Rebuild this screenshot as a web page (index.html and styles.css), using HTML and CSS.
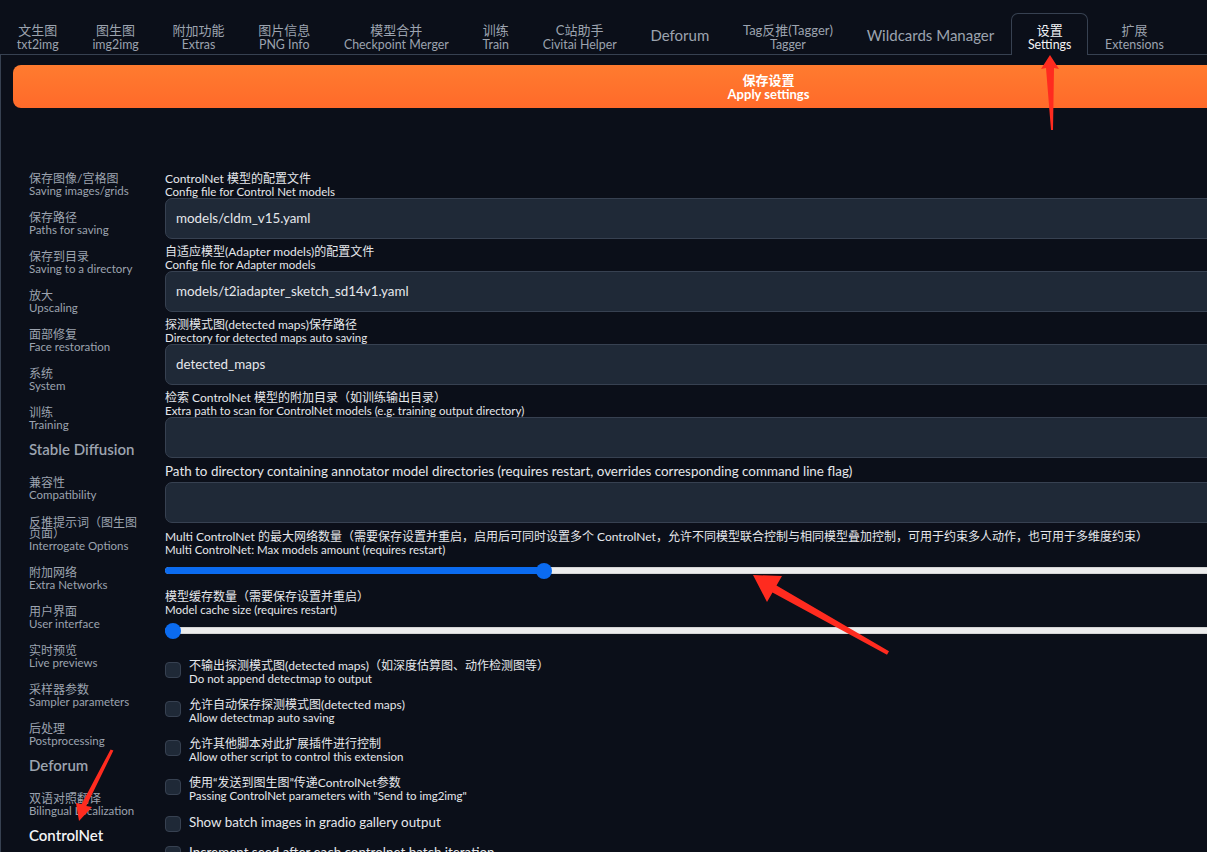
FILE: index.html
```html
<!DOCTYPE html>
<html lang="zh">
<head>
<meta charset="utf-8">
<title>Settings</title>
<link rel="stylesheet" href="styles.css">
</head>
<body>
<div class="app">
  <nav class="tabs">
    <div class="tab"><span class="cn">文生图</span><span class="en">txt2img</span></div>
    <div class="tab"><span class="cn">图生图</span><span class="en">img2img</span></div>
    <div class="tab"><span class="cn">附加功能</span><span class="en">Extras</span></div>
    <div class="tab"><span class="cn">图片信息</span><span class="en">PNG Info</span></div>
    <div class="tab"><span class="cn">模型合并</span><span class="en">Checkpoint Merger</span></div>
    <div class="tab"><span class="cn">训练</span><span class="en">Train</span></div>
    <div class="tab"><span class="cn">C站助手</span><span class="en">Civitai Helper</span></div>
    <div class="tab single"><span>Deforum</span></div>
    <div class="tab"><span class="cn">Tag反推(Tagger)</span><span class="en">Tagger</span></div>
    <div class="tab single"><span>Wildcards Manager</span></div>
    <div class="tab active"><span class="cn">设置</span><span class="en">Settings</span></div>
    <div class="tab"><span class="cn">扩展</span><span class="en">Extensions</span></div>
  </nav>

  <div class="panel">
    <button class="apply"><span>保存设置</span><span>Apply settings</span></button>

    <div class="settings">
      <aside class="side">
        <div class="item"><span class="cn">保存图像/宫格图</span><span class="en">Saving images/grids</span></div>
        <div class="item"><span class="cn">保存路径</span><span class="en">Paths for saving</span></div>
        <div class="item"><span class="cn">保存到目录</span><span class="en">Saving to a directory</span></div>
        <div class="item"><span class="cn">放大</span><span class="en">Upscaling</span></div>
        <div class="item"><span class="cn">面部修复</span><span class="en">Face restoration</span></div>
        <div class="item"><span class="cn">系统</span><span class="en">System</span></div>
        <div class="item"><span class="cn">训练</span><span class="en">Training</span></div>
        <div class="head">Stable Diffusion</div>
        <div class="item"><span class="cn">兼容性</span><span class="en">Compatibility</span></div>
        <div class="item wrap"><span class="cn">反推提示词（图生图页面）</span><span class="en">Interrogate Options</span></div>
        <div class="item"><span class="cn">附加网络</span><span class="en">Extra Networks</span></div>
        <div class="item"><span class="cn">用户界面</span><span class="en">User interface</span></div>
        <div class="item"><span class="cn">实时预览</span><span class="en">Live previews</span></div>
        <div class="item"><span class="cn">采样器参数</span><span class="en">Sampler parameters</span></div>
        <div class="item"><span class="cn">后处理</span><span class="en">Postprocessing</span></div>
        <div class="head">Deforum</div>
        <div class="item"><span class="cn">双语对照翻译</span><span class="en">Bilingual Localization</span></div>
        <div class="head current">ControlNet</div>
      </aside>

      <main class="content">
        <div class="field">
          <label class="lbl"><span class="cn">ControlNet 模型的配置文件</span><span class="en">Config file for Control Net models</span></label>
          <div class="input">models/cldm_v15.yaml</div>
        </div>
        <div class="field">
          <label class="lbl"><span class="cn">自适应模型(Adapter models)的配置文件</span><span class="en">Config file for Adapter models</span></label>
          <div class="input">models/t2iadapter_sketch_sd14v1.yaml</div>
        </div>
        <div class="field">
          <label class="lbl"><span class="cn">探测模式图(detected maps)保存路径</span><span class="en">Directory for detected maps auto saving</span></label>
          <div class="input">detected_maps</div>
        </div>
        <div class="field">
          <label class="lbl"><span class="cn">检索 ControlNet 模型的附加目录（如训练输出目录）</span><span class="en">Extra path to scan for ControlNet models (e.g. training output directory)</span></label>
          <div class="input"></div>
        </div>
        <div class="field">
          <label class="lbl single">Path to directory containing annotator model directories (requires restart, overrides corresponding command line flag)</label>
          <div class="input"></div>
        </div>

        <div class="slider-field first">
          <label class="lbl"><span class="cn">Multi ControlNet 的最大网络数量（需要保存设置并重启，启用后可同时设置多个 ControlNet，允许不同模型联合控制与相同模型叠加控制，可用于约束多人动作，也可用于多维度约束）</span><span class="en">Multi ControlNet: Max models amount (requires restart)</span></label>
          <div class="slider"><div class="track"><div class="fill" style="width:378px"></div><div class="thumb" style="left:378px"></div></div></div>
        </div>
        <div class="slider-field">
          <label class="lbl"><span class="cn">模型缓存数量（需要保存设置并重启）</span><span class="en">Model cache size (requires restart)</span></label>
          <div class="slider"><div class="track"><div class="fill" style="width:7px"></div><div class="thumb" style="left:7px"></div></div></div>
        </div>

        <div class="checks">
          <div class="check"><span class="box"></span><span class="ctext"><span class="cn">不输出探测模式图(detected maps)（如深度估算图、动作检测图等）</span><span class="en">Do not append detectmap to output</span></span></div>
          <div class="check"><span class="box"></span><span class="ctext"><span class="cn">允许自动保存探测模式图(detected maps)</span><span class="en">Allow detectmap auto saving</span></span></div>
          <div class="check"><span class="box"></span><span class="ctext"><span class="cn">允许其他脚本对此扩展插件进行控制</span><span class="en">Allow other script to control this extension</span></span></div>
          <div class="check"><span class="box"></span><span class="ctext"><span class="cn">使用“发送到图生图”传递ControlNet参数</span><span class="en">Passing ControlNet parameters with "Send to img2img"</span></span></div>
          <div class="check single"><span class="box"></span><span class="ctext">Show batch images in gradio gallery output</span></div>
          <div class="check single"><span class="box"></span><span class="ctext">Increment seed after each controlnet batch iteration</span></div>
        </div>
      </main>
    </div>
  </div>

  <svg class="marks" width="1207" height="852" viewBox="0 0 1207 852" aria-hidden="true">
    <polygon points="1050,55 1059,69 1054,68 1053,130 1051,130 1046,68 1041,69"/>
    <polygon points="753,575 782,576 776.5,585.5 889,651.3 887,654.7 772.5,592.5 767,602"/>
    <polygon points="79,821 76,803 81.7,804 110.6,749.4 113.4,750.6 86.3,806 92,807"/>
  </svg>
</div>
</body>
</html>
```

FILE: styles.css
```css
* { box-sizing: border-box; margin: 0; padding: 0; }
html, body { background: #0b0f19; overflow: hidden; }
body {
  margin: 0;
  font-family: Lato, "Noto Sans CJK SC", sans-serif;
  color: #e5e7eb;
}
.app { position: relative; width: 1536px; height: 852px; }

/* top tabs */
.tabs {
  display: flex;
  align-items: flex-start;
  height: 55px;
  padding-top: 13px;
  border-bottom: 1px solid #374151;
}
.tab {
  display: flex;
  flex-direction: column;
  align-items: center;
  height: 41px;
  padding: 11px 16.85px 0;
  color: #9ca3af;
  line-height: 13.5px;
  white-space: nowrap;
}
.tab .cn { font-size: 13px; }
.tab .en { font-size: 12.4px; }
.tab.single { font-size: 15px; line-height: 16px; padding-top: 14px; }
.tab.active {
  height: 42px;
  margin-bottom: -1px;
  padding: 10px 15.85px 0;
  border: 1px solid #374151;
  border-bottom: none;
  border-radius: 7px 7px 0 0;
  background: #0b0f19;
  color: #f3f4f6;
}

/* panel */
.panel {
  border-left: 1px solid #374151;
  padding: 10px 12px 0 12px;
}
.apply {
  display: flex;
  flex-direction: column;
  justify-content: center;
  align-items: center;
  width: 100%;
  height: 43px;
  border: none;
  border-radius: 8px;
  background: linear-gradient(180deg, #ff7b2f 0%, #ff6a2a 100%);
  color: #ffffff;
  font-family: inherit;
  font-size: 13px;
  line-height: 14px;
  font-weight: 700;
}

.settings { display: flex; margin-top: 62px; }

/* sidebar */
.side {
  width: 152px;
  flex: none;
  padding: 3px 0 0 16px;
  display: flex;
  flex-direction: column;
  gap: 15px;
  color: #9ca3af;
}
.item { display: flex; flex-direction: column; width: 114px; }
.item.wrap { margin-top: 1px; }
.item .cn { font-size: 12px; line-height: 11px; }
.item .en { font-size: 11.5px; line-height: 13px; white-space: nowrap; }
.head {
  font-size: 15px;
  line-height: 25px;
  margin-top: -9px;
  font-weight: 600;
  white-space: nowrap;
}
.head.current { color: #f3f4f6; }

/* content */
.content { flex: 1; padding-top: 3px; min-width: 0; }
.field { margin-bottom: 7px; }
.lbl { display: flex; flex-direction: column; color: #e5e7eb; }
.lbl .cn { font-size: 12px; line-height: 12px; white-space: nowrap; }
.lbl .en { font-size: 11.5px; line-height: 13px; white-space: nowrap; }
.lbl.single { font-size: 13.4px; line-height: 13px; margin-bottom: 4px; white-space: nowrap; }
.input {
  height: 41px;
  background: #1f2937;
  border: 1px solid #374151;
  border-radius: 7px;
  padding: 0 10px;
  font-size: 13.4px;
  line-height: 39px;
  color: #e5e7eb;
}

.slider-field { margin-bottom: 6px; }
.slider-field.first { padding-top: 1px; }
.slider { height: 29px; display: flex; align-items: center; }
.track {
  position: relative;
  width: 100%;
  height: 7px;
  border-radius: 4px;
  background: #ececec;
  border: 1px solid #d4d4d4;
}
.fill {
  position: absolute;
  left: -1px; top: -1px; bottom: -1px;
  background: #0b6bf0;
  border-radius: 4px;
}
.thumb {
  position: absolute;
  top: 50%;
  width: 16px; height: 16px;
  margin: -8px 0 0 -8px;
  border-radius: 50%;
  background: #0b6bf0;
}

.checks { display: flex; flex-direction: column; gap: 14px; padding-top: 9px; }
.check { display: flex; align-items: flex-start; gap: 8px; }
.box {
  flex: none;
  width: 16px; height: 16px;
  margin-top: 2px;
  border-radius: 4px;
  background: #1f2937;
  border: 1px solid #374151;
}
.check.single .box { margin-top: 0; }
.ctext { display: flex; flex-direction: column; color: #e5e7eb; }
.ctext .cn { font-size: 12px; line-height: 12px; white-space: nowrap; }
.ctext .en { font-size: 11.5px; line-height: 13px; white-space: nowrap; }
.check.single .ctext { font-size: 13.4px; line-height: 13px; white-space: nowrap; }

/* annotation arrows */
.marks { position: absolute; left: 0; top: 0; pointer-events: none; }
.marks polygon { fill: #ff2b1f; }
```
